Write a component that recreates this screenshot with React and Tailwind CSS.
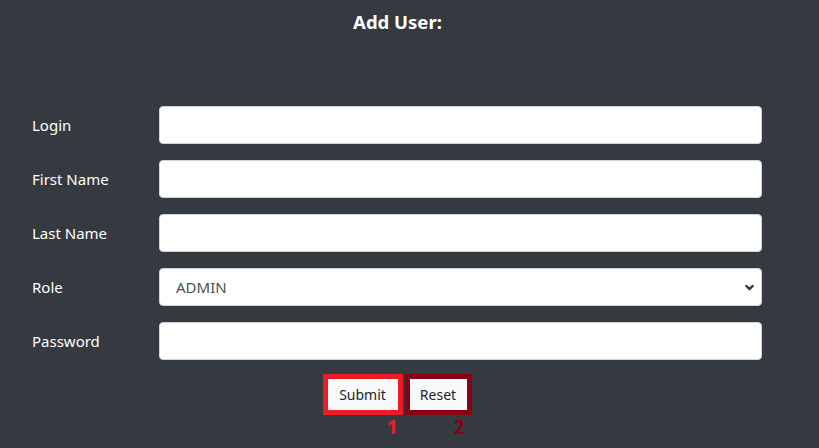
import { ChevronDown } from 'lucide-react';

const fields = [
    { label: 'Login', type: 'text' },
    { label: 'First Name', type: 'text' },
    { label: 'Last Name', type: 'text' },
    { label: 'Role', type: 'select' },
    { label: 'Password', type: 'password' },
];

export default function App() {
    return (
        <div className="w-[819px] h-[448px] bg-[#343a40] text-white overflow-hidden" style={{ fontFamily: '"Noto Sans", "Open Sans", sans-serif' }}>
            <h1 className="pt-[9px] pr-[24px] text-center text-[18.5px] font-bold leading-[26px]">Add User:</h1>

            <form className="mt-[71px] flex flex-col gap-4 pl-[32px] pr-[57px]">
                {fields.map((f) => (
                    <div key={f.label} className="flex items-center h-[38px]">
                        <label className="w-[127px] text-[15px]">{f.label}</label>
                        {f.type === 'select' ? (
                            <div className="relative flex-1 h-[38px] bg-white rounded border border-[#ced4da] flex items-center pl-4">
                                <span className="text-[15px] text-[#495057]">ADMIN</span>
                                <ChevronDown className="absolute right-[5px] w-[13px] h-[13px] text-[#343a40]" strokeWidth={4} />
                            </div>
                        ) : (
                            <input type={f.type} className="flex-1 h-[38px] bg-white rounded border border-[#ced4da] outline-none" />
                        )}
                    </div>
                ))}

                <div className="flex justify-center gap-[2px] -mt-[2px]">
                    <div className="flex flex-col items-end">
                        <div className="border-[5px] border-[#ed1c24]">
                            <button type="button" className="w-[70px] h-[31px] bg-[#f8f9fa] text-[#212529] text-[14px]">Submit</button>
                        </div>
                        <span className="mr-[5px] text-[#ed1c24] text-[19px] font-bold leading-[24px]">1</span>
                    </div>
                    <div className="flex flex-col items-end">
                        <div className="border-[5px] border-[#880015]">
                            <button type="button" className="w-[57px] h-[31px] bg-[#f8f9fa] text-[#212529] text-[14px]">Reset</button>
                        </div>
                        <span className="mr-[7px] text-[#880015] text-[19px] font-bold leading-[24px]">2</span>
                    </div>
                </div>
            </form>
        </div>
    );
}
